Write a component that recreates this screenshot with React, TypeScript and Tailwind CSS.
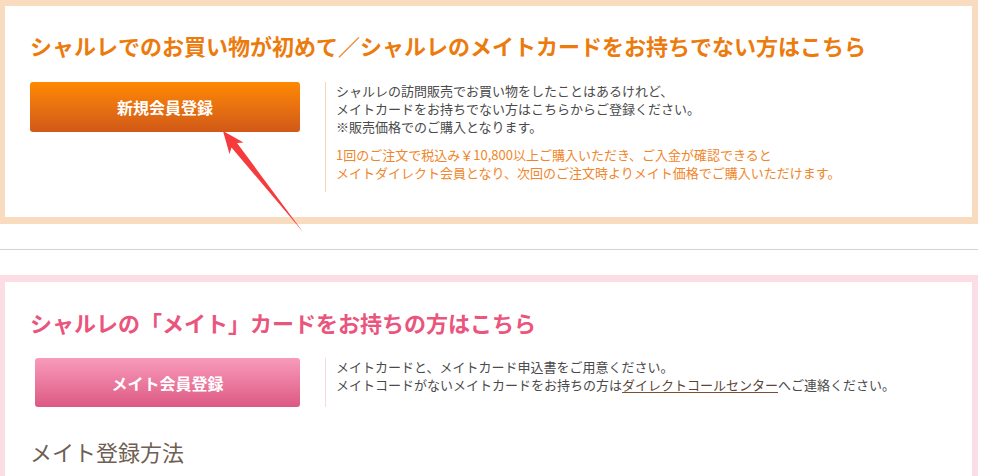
export default function App() {
  return (
    <div className="relative min-h-[476px] w-[983px] overflow-hidden bg-white font-['Noto_Sans_CJK_JP','Noto_Sans',sans-serif] text-[#4a4a4a]">
      <div className="w-[978px]">
        {/* 初めての方 */}
        <section className="border-[6px] border-b-[7px] border-l-[5px] border-[#f9dbc0] bg-white pb-[25px] pl-[25px] pr-6 pt-[26px]">
          <h2 className="text-[22px] font-bold leading-[26px] text-[#ec7b0e]">
            シャルレでのお買い物が初めて／シャルレのメイトカードをお持ちでない方はこちら
          </h2>
          <div className="mt-6 flex">
            <div className="w-[270px] shrink-0">
              <a className="flex h-[50px] cursor-pointer items-center justify-center rounded-[3px] bg-linear-to-b from-[#ff8900] to-[#d15917] text-base font-bold text-white">
                新規会員登録
              </a>
            </div>
            <div className="ml-[25px] border-l border-[#f5d5bd] pb-[10px] pl-[10px] text-[13px] leading-[18px]">
              <p>
                シャルレの訪問販売でお買い物をしたことはあるけれど、
                <br />
                メイトカードをお持ちでない方はこちらからご登録ください。
                <br />
                ※販売価格でのご購入となります。
              </p>
              <p className="mt-[10px] text-[#f0862a]">
                1回のご注文で税込み￥10,800以上ご購入いただき、ご入金が確認できると
                <br />
                メイトダイレクト会員となり、次回のご注文時よりメイト価格でご購入いただけます。
              </p>
            </div>
          </div>
        </section>

        <div className="mt-[25px] h-px bg-[#d9d2cb]" />

        {/* メイトカードをお持ちの方 */}
        <section className="mt-[25px] border-[6px] border-l-[5px] border-t-[7px] border-[#fcdce5] bg-white pb-10 pl-[25px] pr-6 pt-[27px]">
          <h2 className="text-[22px] font-bold leading-[26px] text-[#ea557d]">
            シャルレの「メイト」カードをお持ちの方はこちら
          </h2>
          <div className="mt-[23px] flex">
            <div className="w-[270px] shrink-0 pl-[5px]">
              <a className="flex h-[49px] cursor-pointer items-center justify-center rounded-[3px] bg-linear-to-b from-[#f89bbc] to-[#dc5884] text-base font-bold text-white">
                メイト会員登録
              </a>
            </div>
            <div className="ml-[25px] border-l border-[#f8d8e2] pb-[10px] pl-[10px] text-[13px] leading-[18px]">
              <p>
                メイトカードと、メイトカード申込書をご用意ください。
                <br />
                メイトコードがないメイトカードをお持ちの方は
                <a className="cursor-pointer text-[#5a4638] underline decoration-[#7a5030] underline-offset-2">
                  ダイレクトコールセンター
                </a>
                へご連絡ください。
              </p>
            </div>
          </div>
          <h3 className="mt-[29px] text-[22px] leading-[30px] text-[#6f5e52]">メイト登録方法</h3>
        </section>
      </div>

      {/* 注釈の矢印 */}
      <svg className="pointer-events-none absolute left-0 top-0" width="983" height="476" viewBox="0 0 983 476">
        <polygon
          points="223,131 243.5,142.5 237,143 303,232 231.5,147.5 229.5,154"
          fill="#f53b3b"
        />
      </svg>
    </div>
  )
}
